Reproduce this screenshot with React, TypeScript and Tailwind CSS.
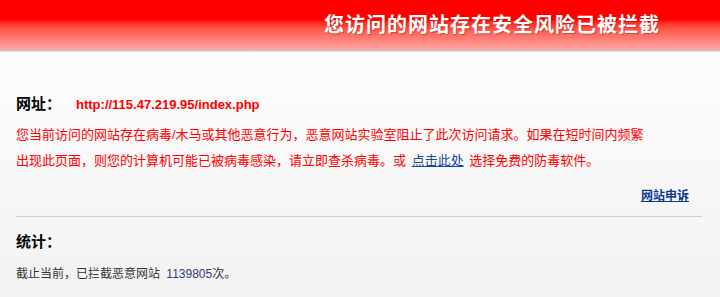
export default function App() {
  const cjk = { fontFamily: '"Liberation Sans", "Noto Sans CJK SC", sans-serif' }

  return (
    <div className="h-[297px] w-[720px] overflow-hidden bg-gradient-to-b from-white to-[#f2f2f2]" style={cjk}>
      <div className="flex h-[50px] items-center justify-end bg-gradient-to-b from-[#ff0000] from-40% to-[#ffa6a6] pr-[60px]">
        <h1 className="text-[20px] font-bold tracking-[1px] text-white [text-shadow:1px_1px_1px_rgba(120,0,0,0.35)]">
          您访问的网站存在安全风险已被拦截
        </h1>
      </div>
      <div className="h-[2px] border-t border-[#c4c4c4] bg-[#e4e4e4]" />

      <div className="px-[16px] pr-[18px] pt-[41px]">
        <div className="flex items-center">
          <span className="text-[15px] font-bold text-black">网址：</span>
          <span className="ml-[15px] text-[13px] font-bold text-[#f00]">http://115.47.219.95/index.php</span>
        </div>

        <p className="mt-[6px] text-[13px] leading-[26px] text-[#f00]">
          您当前访问的网站存在病毒/木马或其他恶意行为，恶意网站实验室阻止了此次访问请求。如果在短时间内频繁
          <br />
          出现此页面，则您的计算机可能已被病毒感染，请立即查杀病毒。或{" "}
          <a href="#" className="mx-[2px] text-[#1a4796] underline">点击此处</a>{" "}
          选择免费的防毒软件。
        </p>

        <div className="mt-[13px] flex justify-end pr-[13px]">
          <a href="#" className="text-[12px] font-bold text-[#0b3a8c] underline">网站申诉</a>
        </div>

        <div className="mt-[11px] h-px bg-[#cccccc]" />

        <div className="mt-[14px] text-[15px] font-bold text-black">统计：</div>

        <p className="mt-[12px] text-[12px] text-[#333]">
          截止当前，已拦截恶意网站 <span className="ml-[3px] text-[#3a3a7a]">1139805</span>次。
        </p>
      </div>
    </div>
  )
}
